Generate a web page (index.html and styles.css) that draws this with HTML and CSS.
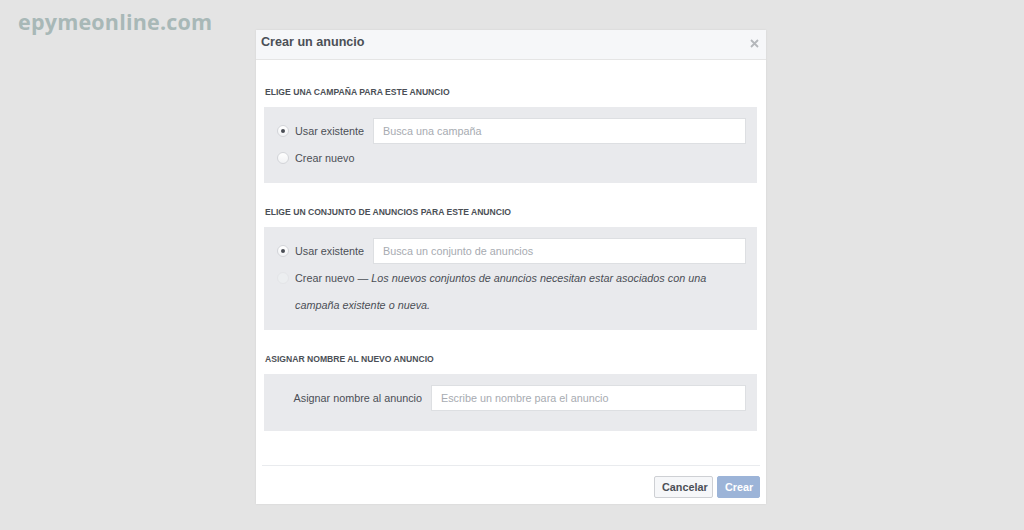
FILE: index.html
```html
<!DOCTYPE html>
<html lang="es">
<head>
<meta charset="utf-8">
<title>Crear un anuncio</title>
<link rel="stylesheet" href="styles.css">
</head>
<body>
<div class="watermark">epymeonline.com</div>
<div class="modal">
  <div class="modal-header">
    <span class="modal-title">Crear un anuncio</span>
    <svg class="close" width="9" height="9" viewBox="0 0 9 9"><path d="M1 1L8 8M8 1L1 8" stroke="#b4b7bb" stroke-width="1.8" fill="none"/></svg>
  </div>
  <div class="modal-body">
    <div class="section">
      <div class="section-title">ELIGE UNA CAMPAÑA PARA ESTE ANUNCIO</div>
      <div class="panel">
        <div class="row">
          <span class="radio checked"></span>
          <span class="label">Usar existente</span>
          <div class="input">Busca una campaña</div>
        </div>
        <div class="row row-text">
          <span class="radio"></span>
          <span class="label">Crear nuevo</span>
        </div>
      </div>
    </div>
    <div class="section">
      <div class="section-title">ELIGE UN CONJUNTO DE ANUNCIOS PARA ESTE ANUNCIO</div>
      <div class="panel panel-tall">
        <div class="row">
          <span class="radio checked"></span>
          <span class="label">Usar existente</span>
          <div class="input">Busca un conjunto de anuncios</div>
        </div>
        <div class="row row-multi">
          <span class="radio disabled"></span>
          <p class="label">Crear nuevo — <em>Los nuevos conjuntos de anuncios necesitan estar asociados con una</em><br><em>campaña existente o nueva.</em></p>
        </div>
      </div>
    </div>
    <div class="section">
      <div class="section-title">ASIGNAR NOMBRE AL NUEVO ANUNCIO</div>
      <div class="panel panel-name">
        <div class="row">
          <span class="name-label">Asignar nombre al anuncio</span>
          <div class="input">Escribe un nombre para el anuncio</div>
        </div>
      </div>
    </div>
  </div>
  <div class="modal-footer">
    <button class="btn btn-cancel">Cancelar</button>
    <button class="btn btn-primary">Crear</button>
  </div>
</div>
</body>
</html>
```
FILE: styles.css
```css
html, body {
  margin: 0;
  padding: 0;
}
body {
  background: #e4e4e4;
  font-family: "Liberation Sans", Arial, sans-serif;
  font-size: 10.8px;
  color: #4b4f56;
  height: 530px;
  overflow: hidden;
}
.watermark {
  position: absolute;
  left: 18px;
  top: 7px;
  font-family: "Open Sans", "DejaVu Sans", sans-serif;
  font-weight: 700;
  font-size: 21.5px;
  color: #a8b8b7;
  letter-spacing: 0.2px;
}
.modal {
  width: 510px;
  margin: 30px 0 0 256px;
  background: #fff;
  box-shadow: 0 0 2px rgba(0,0,0,0.08);
}
.modal-header {
  height: 29px;
  background: #f6f7f9;
  border-bottom: 1px solid #e5e5e5;
  display: flex;
  align-items: center;
  justify-content: space-between;
  padding: 0 7px 0 5px;
  box-sizing: content-box;
}
.modal-title {
  font-size: 12.6px;
  font-weight: 700;
  color: #4b4f56;
  margin-bottom: 5px;
}
.close {
  display: block;
  margin-bottom: 2px;
}
.modal-body {
  padding: 26px 3px 34px 2px;
  border-bottom: 1px solid #e9ebee;
  margin: 0 6px;
}
.section + .section {
  margin-top: 23px;
}
.section-title {
  font-size: 8.6px;
  font-weight: 700;
  line-height: 12px;
  color: #4b4f56;
  padding-left: 1px;
  margin-bottom: 9px;
}
.panel {
  background: #e9eaed;
  padding: 11px 11px 12px 13px;
  display: flex;
  flex-direction: column;
  gap: 1px;
}
.panel-tall {
  padding-bottom: 11px;
}
.panel-name {
  padding-bottom: 20px;
}
.row {
  display: flex;
  align-items: center;
  height: 26px;
}
.row-multi {
  height: auto;
  align-items: flex-start;
  line-height: 27px;
}
.radio {
  width: 10px;
  height: 10px;
  border-radius: 50%;
  border: 1px solid #d3d5d9;
  background: linear-gradient(#fff, #f1f2f4);
  flex: none;
  margin-right: 6px;
  position: relative;
  box-sizing: content-box;
}
.row-multi .radio {
  margin-top: 7px;
}
.radio.checked::after {
  content: "";
  position: absolute;
  left: 3px;
  top: 3px;
  width: 4px;
  height: 4px;
  border-radius: 50%;
  background: #4b4f56;
}
.radio.disabled {
  border-color: #e4e5e8;
  background: #eceef0;
}
.label {
  color: #4b4f56;
  white-space: nowrap;
  margin: 0;
}
.row-multi .label {
  white-space: nowrap;
}
.row-multi em {
  font-style: italic;
}
.input {
  flex: 1;
  height: 26px;
  box-sizing: border-box;
  border: 1px solid #dddfe2;
  background: #fff;
  color: #a7abb1;
  display: flex;
  align-items: center;
  padding-left: 9px;
  margin-left: 9px;
}
.name-label {
  width: 145px;
  text-align: right;
  color: #4b4f56;
}
.modal-footer {
  display: flex;
  justify-content: flex-end;
  gap: 4px;
  padding: 10px 6px 6px 0;
}
.btn {
  font-family: "Liberation Sans", Arial, sans-serif;
  font-size: 10.8px;
  font-weight: 700;
  height: 22px;
  padding: 0 7px;
  border-radius: 2px;
  cursor: pointer;
}
.btn-cancel {
  background: #f6f7f9;
  border: 1px solid #ced0d4;
  color: #4b4f56;
  width: 59px;
}
.btn-primary {
  background: #9cb4d8;
  border: 1px solid #9cb4d8;
  color: #fff;
  width: 43px;
}
```
